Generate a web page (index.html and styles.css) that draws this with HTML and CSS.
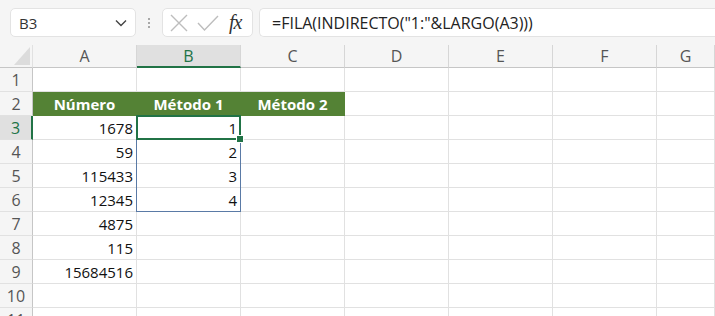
FILE: index.html
```html
<!DOCTYPE html>
<html>

<head>
  <title>Libro1 - Excel</title>
  <link rel="stylesheet" href="styles.css">
</head>

<body>
  <div class="toolbar">
    <div class="namebox">
      <span>B3</span>
      <svg class="chev" width="12" height="8" viewBox="0 0 12 8"><path d="M1 1.5 L6 6.5 L11 1.5" fill="none" stroke="#444" stroke-width="1.4"/></svg>
    </div>
    <div class="sep"><i></i><i></i><i></i></div>
    <div class="fxbox">
      <svg width="20" height="20" viewBox="0 0 20 20"><path d="M2 2 L18 18 M18 2 L2 18" stroke="#bdbdbd" stroke-width="1.4"/></svg>
      <svg width="22" height="20" viewBox="0 0 22 20"><path d="M1 10 L7.5 17 L21 3" fill="none" stroke="#bdbdbd" stroke-width="1.4"/></svg>
      <span class="fx">fx</span>
    </div>
    <div class="formula">=FILA(INDIRECTO("1:"&amp;LARGO(A3)))</div>
  </div>

  <div class="sheet">
    <div class="corner"><svg width="16" height="18" viewBox="0 0 16 18"><path d="M16 0 L16 18 L0 18 Z" fill="#dcdcdc"/></svg></div>
    <div class="colhead">A</div>
    <div class="colhead on">B</div>
    <div class="colhead">C</div>
    <div class="colhead">D</div>
    <div class="colhead">E</div>
    <div class="colhead">F</div>
    <div class="colhead">G</div>

    <div class="rowhead">1</div>
    <div class="cell"></div><div class="cell"></div><div class="cell"></div><div class="cell"></div><div class="cell"></div><div class="cell"></div><div class="cell"></div>

    <div class="rowhead">2</div>
    <div class="cell title">Número</div><div class="cell title">Método 1</div><div class="cell title">Método 2</div><div class="cell"></div><div class="cell"></div><div class="cell"></div><div class="cell"></div>

    <div class="rowhead on">3</div>
    <div class="cell num">1678</div><div class="cell num">1</div><div class="cell"></div><div class="cell"></div><div class="cell"></div><div class="cell"></div><div class="cell"></div>

    <div class="rowhead">4</div>
    <div class="cell num">59</div><div class="cell num">2</div><div class="cell"></div><div class="cell"></div><div class="cell"></div><div class="cell"></div><div class="cell"></div>

    <div class="rowhead">5</div>
    <div class="cell num">115433</div><div class="cell num">3</div><div class="cell"></div><div class="cell"></div><div class="cell"></div><div class="cell"></div><div class="cell"></div>

    <div class="rowhead">6</div>
    <div class="cell num">12345</div><div class="cell num">4</div><div class="cell"></div><div class="cell"></div><div class="cell"></div><div class="cell"></div><div class="cell"></div>

    <div class="rowhead">7</div>
    <div class="cell num">4875</div><div class="cell"></div><div class="cell"></div><div class="cell"></div><div class="cell"></div><div class="cell"></div><div class="cell"></div>

    <div class="rowhead">8</div>
    <div class="cell num">115</div><div class="cell"></div><div class="cell"></div><div class="cell"></div><div class="cell"></div><div class="cell"></div><div class="cell"></div>

    <div class="rowhead">9</div>
    <div class="cell num">15684516</div><div class="cell"></div><div class="cell"></div><div class="cell"></div><div class="cell"></div><div class="cell"></div><div class="cell"></div>

    <div class="rowhead">10</div>
    <div class="cell"></div><div class="cell"></div><div class="cell"></div><div class="cell"></div><div class="cell"></div><div class="cell"></div><div class="cell"></div>

    <div class="rowhead">11</div>
    <div class="cell"></div><div class="cell"></div><div class="cell"></div><div class="cell"></div><div class="cell"></div><div class="cell"></div><div class="cell"></div>

    <div class="range"></div>
    <div class="active"><span class="handle"></span></div>
  </div>
</body>

</html>
```

FILE: styles.css
```css
body {
  margin: 0;
  background: #fff;
  font-family: "Open Sans", "Noto Sans", sans-serif;
  color: #222;
  overflow: hidden;
}

.toolbar {
  display: flex;
  align-items: center;
  height: 45px;
  padding: 0 0 0 10px;
  background: #f5f5f5;
  box-sizing: border-box;
}

.namebox {
  display: flex;
  align-items: center;
  justify-content: space-between;
  width: 126px;
  height: 29px;
  padding: 0 8px 0 8px;
  box-sizing: border-box;
  background: #fff;
  border: 1px solid #e3e3e3;
  border-radius: 5px;
  font-size: 15px;
  color: #333;
}

.sep {
  display: flex;
  flex-direction: column;
  gap: 2px;
  width: 26px;
  align-items: center;
}

.sep i {
  width: 2px;
  height: 2px;
  background: #a8a8a8;
}

.fxbox {
  display: flex;
  align-items: center;
  gap: 8px;
  width: 91px;
  height: 29px;
  padding: 0 0 0 6px;
  box-sizing: border-box;
  background: #fff;
  border: 1px solid #e3e3e3;
  border-radius: 5px;
}

.fx {
  font-family: "Liberation Serif", "DejaVu Serif", serif;
  font-style: italic;
  font-size: 20px;
  color: #333;
  margin-left: 2px;
  letter-spacing: -1px;
}

.formula {
  flex: 1;
  height: 29px;
  margin-left: 6px;
  padding: 0 0 0 12px;
  box-sizing: border-box;
  display: flex;
  align-items: center;
  background: #fff;
  border: 1px solid #e3e3e3;
  border-right: none;
  border-radius: 5px 0 0 5px;
  font-size: 16px;
  color: #222;
}

.sheet {
  position: relative;
  display: grid;
  grid-template-columns: 33px repeat(6, 104px) 1fr;
  grid-template-rows: 23px repeat(11, 24px);
}

.corner,
.colhead,
.rowhead {
  background: #f5f5f5;
  box-sizing: border-box;
  border-right: 1px solid #e1e1e1;
  border-bottom: 1px solid #c6c6c6;
  color: #555;
  font-size: 16px;
  display: flex;
  align-items: center;
  justify-content: center;
}

.corner {
  justify-content: flex-end;
  align-items: flex-end;
  padding: 0 2px 2px 0;
}

.colhead {
  border-right: 1px solid #d6d6d6;
}

.colhead.on {
  background: #e0e0e0;
  color: #217346;
  border-bottom: 2px solid #217346;
}

.rowhead {
  border-right: 1px solid #c6c6c6;
  border-bottom: 1px solid #e1e1e1;
}

.rowhead.on {
  background: #e0e0e0;
  color: #217346;
  border-right: 2px solid #217346;
}

.cell {
  box-sizing: border-box;
  border-right: 1px solid #e1e1e1;
  border-bottom: 1px solid #e1e1e1;
  font-size: 15px;
  display: flex;
  align-items: center;
  padding: 0 3px;
  color: #111;
}

.title {
  background: #548235;
  color: #fff;
  font-weight: 700;
  font-size: 15px;
  justify-content: center;
  border-color: #548235;
}

.num {
  justify-content: flex-end;
}

/* selection overlays sit in their grid area without taking a cell */
.range,
.active {
  position: absolute;
  grid-column: 3 / 4;
  top: -1px;
  left: -1px;
  right: 0;
  bottom: 0;
  pointer-events: none;
}

.range {
  grid-row: 4 / 8;
  border: 1px solid #5a7aa6;
}

.active {
  grid-row: 4 / 5;
  border: 2px solid #217346;
}

.handle {
  position: absolute;
  right: -5px;
  bottom: -5px;
  width: 6px;
  height: 6px;
  background: #217346;
  border: 1px solid #fff;
}
```
